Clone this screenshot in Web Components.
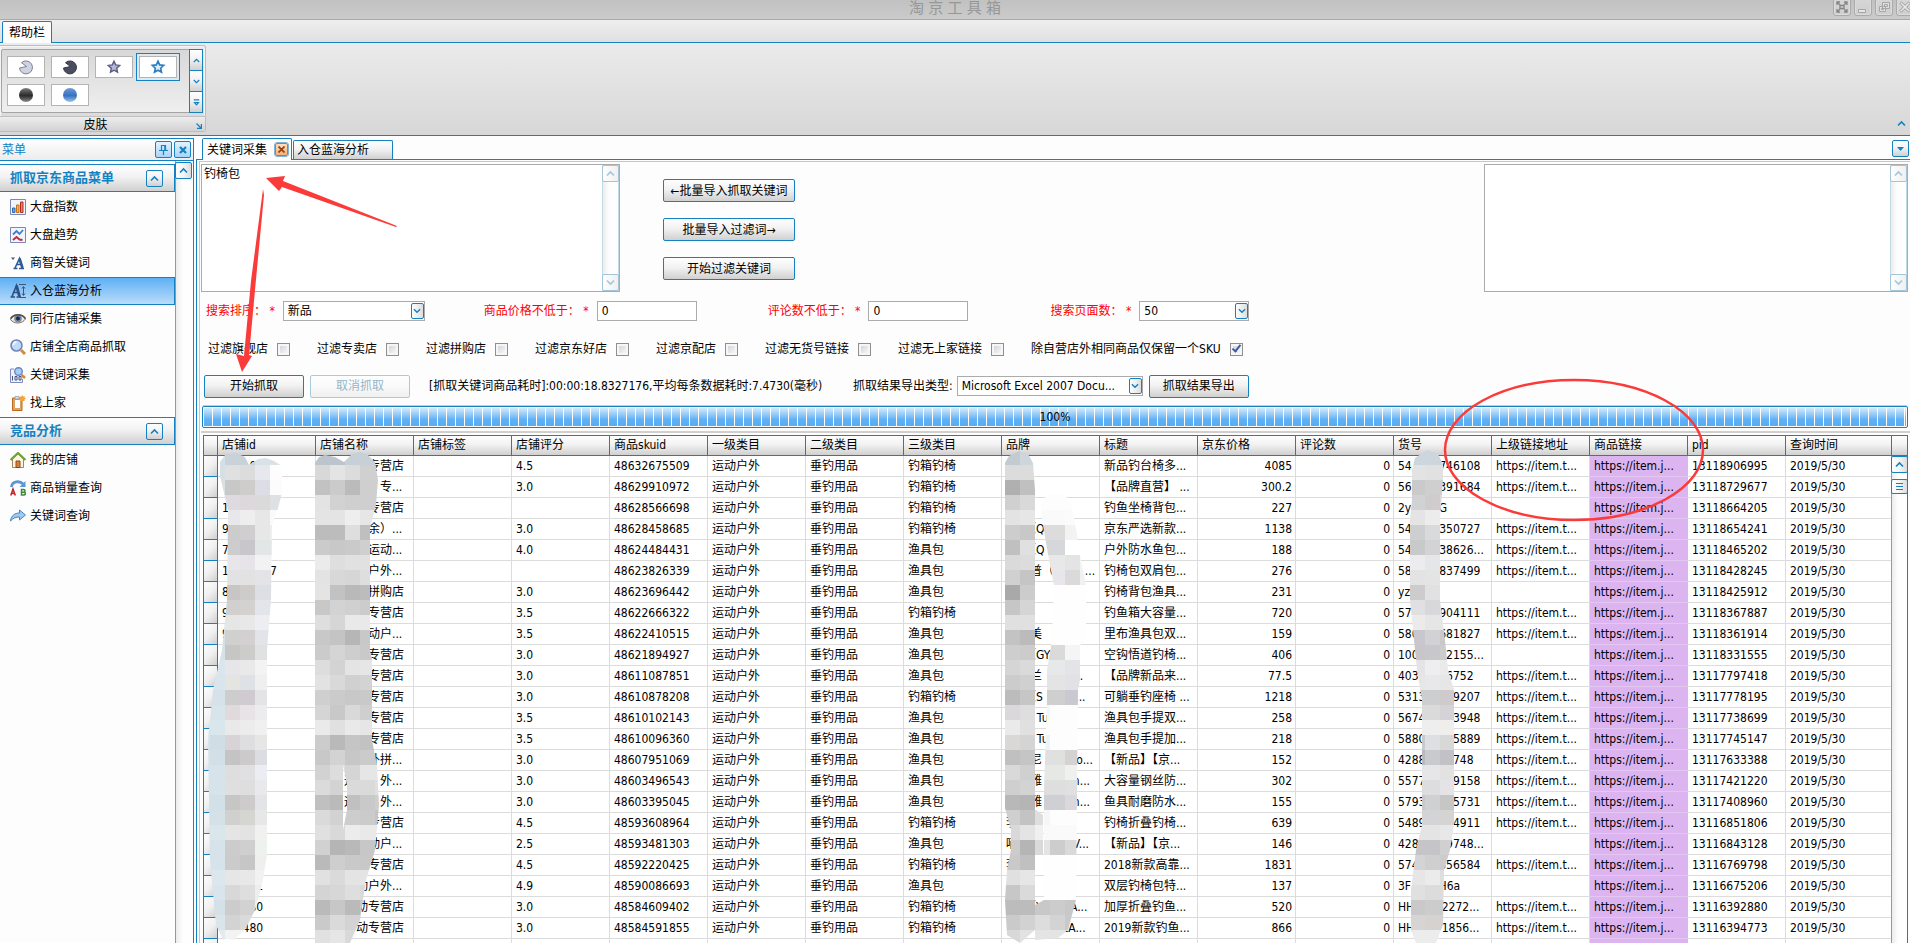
<!DOCTYPE html>
<html lang="zh-CN">
<head>
<meta charset="utf-8">
<title>淘京工具箱</title>
<style>
html, body { margin: 0; }
body {
  font: 12px/16px "DejaVu Sans Condensed", "Noto Sans", "Noto Sans CJK SC", sans-serif;
  color: #000; background: #fdfdfd; overflow: hidden;
  --blue: #1482c2; --grey: #ababab; --line: #dcdcdc;
  --face: linear-gradient(#fefefe, #f2f2f2 45%, #d0d0d0);
}
</style>
</head>
<body>
<app-window></app-window>
<script>
const BASE = `
*, *::before, *::after { box-sizing: border-box; }
button, input, select, textarea { font: inherit; color: inherit; margin: 0; }
button { padding: 0; cursor: default; }
svg { display: block; }
`;
function define(name, css, html, setup) {
  customElements.define(name, class extends HTMLElement {
    constructor() {
      super();
      const root = this.attachShadow({ mode: 'open' });
      root.innerHTML = `<style>${BASE}${css}</style>${typeof html === 'function' ? html(this) : html}`;
      if (setup) setup(root, this);
    }
  });
}
const chevron = (d, w = 9) => `<svg width="${w}" height="${w}" viewBox="0 0 9 9" fill="none" stroke="currentColor" stroke-width="1.6"><path d="${d}"/></svg>`;
const UP = 'M1 6.5 4.5 3 8 6.5', DOWN = 'M1 2.5 4.5 6 8 2.5';

/* ---------- small controls ---------- */
define('tool-button', `
:host { display: block; height: 23px; }
button { width: 100%; height: 100%; border: 1px solid var(--blue); border-radius: 2px; background: var(--face); }
button:disabled { border-color: #a8cadf; color: #94b6c9; background: linear-gradient(#fefefe, #fafafa 45%, #f0f0f0); }
`, el => `<button type="button" ${el.hasAttribute('disabled') ? 'disabled' : ''}><slot></slot></button>`);

define('scroll-strip', `
:host { display: flex; flex-direction: column; justify-content: space-between; width: 17px; border-left: 1px solid #58abe2; color: var(--blue);
  background: linear-gradient(90deg, #ececec, #fefefe 40%); }
:host([pale]) { color: #a3c6db; border-left-color: #c3dbe9; border-right: 1px solid #c3dbe9; }
:host([single]) { width: 18px; }
button { width: 17px; margin-left: -1px; height: 17px; display: grid; place-items: center; color: inherit; border: 1px solid currentColor; border-radius: 2px;
  background: linear-gradient(90deg, #fefefe, #f4f4f4 50%, #dcdcdc); }
:host([pale]) button { background: linear-gradient(90deg, #fefefe, #f0f0f0); }
:host([thumb]) { justify-content: flex-start; gap: 6px; }
.bars { height: 15px; }
`, el => `<button type="button" aria-label="向上滚动">${chevron(UP)}</button>` + (
  el.hasAttribute('thumb')
    ? `<button type="button" class="bars" aria-label="滚动块"><svg width="7" height="7" viewBox="0 0 7 7" stroke="currentColor"><path d="M0 .5h7M0 3.5h7M0 6.5h7"/></svg></button>`
    : el.hasAttribute('single') ? '' : `<button type="button" aria-label="向下滚动">${chevron(DOWN)}</button>`));

define('memo-box', `
:host { display: flex; height: 128px; border: 1px solid var(--grey); background: #fff; }
textarea { flex: 1; min-width: 0; border: 0; resize: none; outline: 0; padding: 1px 2px; background: transparent; }
`, el => `<textarea aria-label="${el.getAttribute('label')}" spellcheck="false">${el.getAttribute('value') || ''}</textarea><scroll-strip pale></scroll-strip>`);

define('form-field', `
:host { display: flex; align-items: center; gap: 8px; height: 20px; white-space: nowrap; }
label { color: #f00; }
:host([plain]) label { color: #000; }
:host([plain]) { gap: 4px; }
.box { position: relative; width: var(--w); }
select, input { display: block; width: 100%; height: 20px; border: 1px solid var(--grey); border-radius: 0; background: #fff; padding: 0 4px; appearance: none; outline: 0; }
.drop { position: absolute; right: 1px; top: 2px; width: 13px; height: 16px; border: 1px solid var(--blue); border-radius: 2px; display: grid; place-items: center; color: var(--blue);
  background: linear-gradient(90deg, #fefefe, #dedede); pointer-events: none; }
`, el => {
  const v = el.getAttribute('value');
  const control = el.hasAttribute('select')
    ? `<select id="c"><option>${v}</option></select><span class="drop">${chevron(DOWN, 8)}</span>`
    : `<input id="c" type="text" value="${v}">`;
  return `<label for="c"><slot></slot></label><div class="box">${control}</div>`;
});

define('tick-field', `
:host { display: block; }
label { display: flex; align-items: center; gap: 9px; white-space: nowrap; }
input { appearance: none; width: 13px; height: 13px; border: 1px solid #8f8f8f; background: linear-gradient(135deg, #d4d6dc, #f6f6f6) content-box, #f6f6f6; padding: 2px; display: grid; place-items: center; }
input:checked::after { content: ""; width: 5px; height: 9px; margin: -3px 0 0 1px; border: solid #3f5ba4; border-width: 0 2px 2px 0; transform: rotate(38deg); }
`, el => `<label><slot></slot><input type="checkbox" ${el.hasAttribute('checked') ? 'checked' : ''}></label>`);

/* ---------- window title ---------- */
define('title-bar', `
:host { display: flex; justify-content: center; height: 20px; border-bottom: 1px solid #a9a9a9; background: linear-gradient(#c1c1c1, #cbcbcb); position: relative; }
h1 { margin: 0; font-size: 15px; font-weight: 400; line-height: 16px; color: #979797; }
.buttons { position: absolute; right: -4px; top: -2px; display: flex; gap: 3px; }
button { width: 18px; height: 18px; border: 1px solid #aaa; border-radius: 3px; background: linear-gradient(#d6d6d6, #cecece); display: grid; place-items: center; box-shadow: inset 0 0 0 1px #dcdcdc; }
`, `
<h1>淘 京 工 具 箱</h1>
<div class="buttons">
<button type="button" aria-label="全屏"><svg width="12" height="12" viewBox="0 0 12 12" fill="none" stroke="#858585" stroke-width="1.3"><path d="M1 4V1h3M8 1h3v3M11 8v3H8M4 11H1V8M1 1l3 3M11 1 8 4M11 11 8 8M1 11l3-3M4 4.5h4v3H4z"/></svg></button>
<button type="button" aria-label="最小化"><svg width="12" height="12" viewBox="0 0 12 12" fill="#e6e6e6" stroke="#a6a6a6"><path d="M1.500 8.500h7v3h-7z"/></svg></button>
<button type="button" aria-label="还原"><svg width="12" height="12" viewBox="0 0 12 12" fill="#e0e0e0" stroke="#a6a6a6"><path d="M4.500 1.500h7v6h-7zM6.500 3.500h3v2h-3zM1.500 5.500h6v5h-6zM3.500 7.500h2v1h-2z"/></svg></button>
<button type="button" aria-label="关闭"><svg width="12" height="12" viewBox="0 0 12 12" fill="#e8e8e8" stroke="#9c9c9c"><path d="m1 2.500 1.500-1.500L6 4.300 9.500 1 11 2.500 7.700 6 11 9.500 9.500 11 6 7.700 2.500 11 1 9.500 4.300 6z"/></svg></button>
</div>`);

/* ---------- ribbon ---------- */
const STAR = 'm8 2.200 1.700 3.700 4 .5-3 2.800.8 4L8 11.200l-3.500 2 .8-4-3-2.800 4-.5z';
const SKINS = [
  ['银色', '<path d="M3.500 3.700A6.500 6.500 0 1 1 1.500 9l7-1.500z" fill="#cfd2e0" stroke="#7d8196"/>'],
  ['深色', '<path d="M3.500 3.700A6.500 6.500 0 1 1 1.500 9l7-1.500z" fill="#4a4d60" stroke="#35384a"/>'],
  ['星形', `<path d="${STAR}" fill="#b4b6d6" stroke="#585a80" stroke-width="1.400"/>`],
  ['蓝星', `<path d="${STAR}" fill="#d7effc" stroke="#2b7cc0" stroke-width="1.600"/>`],
  ['黑色', '<circle cx="8" cy="8" r="7" fill="url(#k)"/>'],
  ['蓝色', '<circle cx="8" cy="8" r="7" fill="url(#b)"/>']
];
define('ribbon-bar', `
:host { display: block; }
.tabs { height: 23px; padding: 1px 2px 0; background: linear-gradient(#eee, #e0e0e0); border-bottom: 1px solid var(--blue); }
.tab { display: block; width: 50px; height: 22px; border: 1px solid var(--blue); border-bottom: 0; border-radius: 2px 2px 0 0; background: #fcfcfc; }
.body { position: relative; height: 93px; border-bottom: 1px solid var(--blue); padding-top: 2px; background: linear-gradient(#ebebeb, #d7d7d7); }
section { width: 206px; height: 87px; border: 1px solid #bdbdbd; border-left: 0; border-radius: 0 3px 3px 0; box-shadow: inset 0 0 0 1px #f4f4f4; }
.gallery { display: flex; height: 64px; margin: 3px 2px 0 1px; border: 1px solid #a5a5a5; border-radius: 2px; background: linear-gradient(#d8d8d8, #efefef); }
.items { flex: 1; display: grid; grid-template-columns: repeat(4, 38px); grid-auto-rows: 22px; gap: 6px; padding: 6px 5px; }
.items button { background: #fff; border: 1px solid #b4b4b4; display: grid; place-items: center; }
.items .on { outline: 1px solid var(--blue); outline-offset: 2px; box-shadow: 0 0 0 2px #dfe8ef; }
.arrows { width: 14px; margin: -1px; display: flex; flex-direction: column; color: var(--blue); }
.arrows button { flex: 1; width: 14px; border: 1px solid var(--blue); background: var(--face); color: inherit; display: grid; place-items: center; }
.arrows button + button { border-top: 0; }
footer { position: relative; height: 15px; margin-top: 3px; border-top: 1px solid #c0c0c0; background: linear-gradient(#ededed, #d2d2d2); text-align: center; padding-right: 14px; }
footer svg { position: absolute; right: 3px; bottom: 2px; }
.fold { position: absolute; right: 4px; bottom: 7px; border: 0; background: none; color: var(--blue); }
`, `
<svg width="0" height="0" style="position:absolute"><defs>
<linearGradient id="k" x2="0" y2="1"><stop stop-color="#808080"/><stop offset=".3" stop-color="#4c4c4c"/><stop offset=".55" stop-color="#2a2a2a"/><stop offset="1" stop-color="#8c8c8c"/></linearGradient>
<linearGradient id="b" x2="0" y2="1"><stop stop-color="#6e9cd8"/><stop offset=".35" stop-color="#4a80ca"/><stop offset=".55" stop-color="#3a70be"/><stop offset="1" stop-color="#9cc6f0"/></linearGradient></defs></svg>
<div class="tabs"><button type="button" class="tab">帮助栏</button></div>
<div class="body"><section><div class="gallery"><div class="items">${
  SKINS.map(([n, p], i) => `<button type="button" aria-label="${n}" class="${i === 3 ? 'on' : ''}"><svg width="16" height="16" viewBox="0 0 16 16">${p}</svg></button>`).join('')
}</div><div class="arrows"><button type="button" aria-label="上一行">${chevron(UP, 7)}</button><button type="button" aria-label="下一行">${chevron(DOWN, 7)}</button><button type="button" aria-label="展开">${chevron('M1 1h7M2 4.500 4.500 7.500 7 4.500z', 7)}</button></div></div>
<footer>皮肤<svg width="6" height="6" viewBox="0 0 6 6" fill="none" stroke="#1482c2" stroke-width="1.200"><path d="M.5.5l4.500 4.500M5.400 1v4.400H1"/></svg></footer></section>
<button type="button" class="fold" aria-label="收起">${chevron(UP)}</button></div>`);

/* ---------- side navigation ---------- */
const ICONS = {
  bars: '<path d="M.5.5h15v15H.5z" fill="#f4f5fc" stroke="#7d86b8"/><path d="M2.500 9h2.500v4.500H2.500z" fill="#6aa6e0" stroke="#2c6cb0"/><path d="M6.500 6h2.500v7.500H6.500z" fill="#f6b45a" stroke="#c06f1a"/><path d="M10.500 3H13v10.500h-2.500z" fill="#f08068" stroke="#b02c20"/>',
  trend: '<path d="M.5.5h15v15H.5z" fill="#f2f3fb" stroke="#7d86b8"/><path d="M3 7.500 6.500 4l3 3L13 3" fill="none" stroke="#3f7ecb" stroke-width="1.800"/><path d="M3 13l3.500-3 3 2.500 3 .5" fill="none" stroke="#c32c38" stroke-width="2"/>',
  fontA: '<path d="M1 2.500h4L3 5z" fill="#4a5a74"/><path d="M3.500 13.500h4M9 13.500h5M5 13 9.500 3.500 12.500 13M6.500 9.500h5" fill="none" stroke="#2f5c96" stroke-width="1.600"/><path d="M9.500 3.500 12.500 13" stroke="#2f5c96" stroke-width="2.600"/>',
  fontSize: '<path d="M.5 14h4.500M6.500 14h4.500M2 13.500 6.500 2.500 9.500 13.500M3.500 9.500h5" fill="none" stroke="#2c5286" stroke-width="1.700"/><path d="M6.500 2.500 9.500 13.500" stroke="#2c5286" stroke-width="2.800"/><path d="M9 1.500h7M9.500 14.500H16M13.500 4v8M12 5.500l1.500-2 1.500 2M12 10.500l1.500 2 1.500-2" fill="none" stroke="#44566e"/>',
  eye: '<path d="M.5 8.500C3 3.500 12 2 15.500 8 12 13 4 13.500.5 8.500z" fill="#ece9e6" stroke="#8c6c50"/><circle cx="8" cy="7.500" r="3.800" fill="#6f8cb0"/><circle cx="8" cy="7.500" r="2" fill="#1b2942"/><path d="M.5 7.500C4 2.500 12 2.500 15.500 7.500" fill="none" stroke="#5e4432" stroke-width="1.500"/>',
  lens: '<circle cx="6.500" cy="6.500" r="5.500" fill="#bcdcf8" stroke="#7484bc" stroke-width="1.600"/><path d="M3.500 6a3 3 0 0 1 3-3" stroke="#fff" stroke-width="1.500" fill="none"/><path d="m11 11 4 4" stroke="#d48a3c" stroke-width="3"/>',
  hundred: '<path d="M4 2H.500v13.500h12V12" fill="#eef1fb" stroke="#7c8cbc"/><path d="M2.500 9v4.500M5 9.500h2v3.500H5zM9 9.500h2v3.500H9z" stroke="#46567c" fill="none"/><circle cx="8.500" cy="4.500" r="3.800" fill="#a8cdf4" stroke="#6c86c4" stroke-width="1.400"/><path d="m11.500 8 3.500 3" stroke="#d48a3c" stroke-width="2.600"/>',
  clip: '<path d="M2.500 3h9.500v12.500H2.500z" fill="#f0a04a" stroke="#b86a1c"/><path d="M4.500 4.500h6v9h-6z" fill="#fff" stroke="#d8a066"/><path d="M5 1.500h4v2.500H5z" fill="#dfe3ea" stroke="#8c8f98" stroke-width=".7"/><path d="M12.500.5v6M9.500 3.500h6M10.500 1.500l4 4M14.500 1.500l-4 4" stroke="#f2a33c" stroke-width="1.300"/>',
  home: '<path d="M2.500 7v8.500h11V7L8 2z" fill="#fdf5e4" stroke="#a8845c"/><path d="M.5 8 8 1l7.500 7" fill="none" stroke="#6ca534" stroke-width="2.200"/><path d="M6 9h4v6.500H6z" fill="#d8813c" stroke="#8a4a1c"/>',
  ab: '<path d="M1.500 7C2 1 10 .5 13 4" fill="none" stroke="#5c97d4" stroke-width="2.800"/><path d="M15.500 1v6h-6z" fill="#5c97d4"/><path d="M.8 15.500 3 9l2.300 6.500M1.500 13.500h3" fill="none" stroke="#c02030" stroke-width="1.500"/><path d="M11.500 9.500v5.500h2q2 0 2-1.500 0-1.300-2-1.300 1.500 0 1.500-1.500 0-1.200-1.500-1.200zM11.500 12.200h2" fill="none" stroke="#3c8a3a" stroke-width="1.500"/>',
  share: '<path d="M.5 13C1 7.500 5 5 9.500 5V2L15.500 7l-6 5V9C6 9 3 10 .5 13z" fill="#9ccaf0" stroke="#4c84bc"/>'
};
define('nav-item', `
:host { display: block; height: 28px; }
a { display: flex; align-items: center; gap: 4px; height: 28px; padding-left: 10px; color: #000; text-decoration: none; border: solid transparent; border-width: 1px 1px 1px 0; white-space: nowrap; }
:host([active]) a { border-color: var(--blue); background: linear-gradient(#5fb0f4, #b9dcfa); }
`, el => `<a href="#"><svg width="16" height="16" viewBox="0 0 16 16">${ICONS[el.getAttribute('icon')]}</svg><slot></slot></a>`);

define('nav-group', `
:host { display: block; }
header { display: flex; align-items: center; justify-content: space-between; height: 28px; margin-bottom: 1px; padding: 0 11px 0 10px; border: 1px solid var(--blue); border-left: 0; background: var(--face); }
h2 { margin: 0; font-size: 13px; color: var(--blue); font-weight: 700; }
button { width: 17px; height: 17px; display: grid; place-items: center; border: 1px solid var(--blue); border-radius: 2px; background: var(--face); color: var(--blue); }
`, el => `<header><h2>${el.getAttribute('heading')}</h2><button type="button" aria-label="折叠">${chevron(UP)}</button></header><slot></slot>`);

define('side-nav', `
:host { display: flex; flex-direction: column; width: 194px; flex: none; margin-top: 2px; border: 1px solid var(--blue); border-width: 1px 1px 0 0; background: #fdfdfd; }
.head { display: flex; align-items: center; gap: 2px; height: 22px; padding: 0 2px; border-bottom: 1px solid var(--blue); background: linear-gradient(#fff, #ececec); color: var(--blue); }
.head span { flex: 1; }
.head button { width: 17px; height: 17px; border: 1px solid var(--blue); border-radius: 2px; background: linear-gradient(#e4f2fd, #a9d4f8); display: grid; place-items: center; }
.body { flex: 1; display: flex; }
nav { flex: 1; padding-top: 3px; }
scroll-strip { padding-top: 1px; }
`, `
<div class="head"><span>菜单</span>
<button type="button" aria-label="固定"><svg width="9" height="10" viewBox="0 0 9 10" fill="none" stroke="#1482c2" stroke-width="1.200"><path d="M2.500.5h4v5h-4zM0 5.500h9M4.500 5.500V10M5.800.5v5"/></svg></button>
<button type="button" aria-label="关闭"><svg width="8" height="8" viewBox="0 0 8 8" stroke="#1482c2" stroke-width="2.200"><path d="m1 1 6 6M7 1 1 7"/></svg></button></div>
<div class="body"><nav>
<nav-group heading="抓取京东商品菜单">
<nav-item icon="bars">大盘指数</nav-item><nav-item icon="trend">大盘趋势</nav-item><nav-item icon="fontA">商智关键词</nav-item><nav-item icon="fontSize" active>入仓蓝海分析</nav-item><nav-item icon="eye">同行店铺采集</nav-item><nav-item icon="lens">店铺全店商品抓取</nav-item><nav-item icon="hundred">关键词采集</nav-item><nav-item icon="clip">找上家</nav-item>
</nav-group>
<nav-group heading="竞品分析">
<nav-item icon="home">我的店铺</nav-item><nav-item icon="ab">商品销量查询</nav-item><nav-item icon="share">关键词查询</nav-item>
</nav-group></nav><scroll-strip single></scroll-strip></div>`);

/* ---------- document tabs ---------- */
define('doc-tabs', `
:host { display: flex; align-items: flex-end; height: 24px; padding: 0 1px 0 6px; border-bottom: 1px solid var(--blue); background: #fdfdfd; }
.tab { display: flex; align-items: center; justify-content: space-between; border: 1px solid var(--blue); border-bottom: 0; border-radius: 2px 2px 0 0; padding: 0 3px; }
.on { width: 90px; height: 22px; margin-bottom: -1px; background: #fdfdfd; padding-left: 4px; }
.off { width: 100px; height: 19px; margin-left: 1px; background: var(--face); }
.tab button { border: 0; background: none; white-space: nowrap; }
.tab .x { width: 13px; height: 13px; border: 1px solid #d07428; border-radius: 2px; background: linear-gradient(#fde0c4, #f6b07a); display: grid; place-items: center; outline: 1px solid #7db4dd; }
.list { width: 17px; height: 17px; margin: 0 0 2px auto; border: 1px solid var(--blue); border-radius: 2px; background: var(--face); display: grid; place-items: center; }
`, `
<div class="tab on"><button type="button">关键词采集</button><button type="button" class="x" aria-label="关闭标签"><svg width="7" height="7" viewBox="0 0 7 7" stroke="#9c3c08" stroke-width="1.700"><path d="m.5.5 6 6M6.500.5l-6 6"/></svg></button></div>
<div class="tab off"><button type="button">入仓蓝海分析</button></div>
<button type="button" class="list" aria-label="标签列表"><svg width="7" height="4" viewBox="0 0 7 4" fill="#1482c2"><path d="M0 0h7L3.500 4z"/></svg></button>`);

/* ---------- search form ---------- */
define('search-form', `
:host { display: block; flex: none; }
.memos { display: flex; }
.left { width: 419px; }
.right { width: 424px; margin-left: auto; }
.actions { display: flex; flex-direction: column; gap: 16px; width: 132px; margin: 15px 0 0 43px; }
.fields { display: flex; gap: 58px; margin: 9px 0 0 5px; }
.fields :nth-child(1) { margin-right: 1px; }
.fields :nth-child(2) { margin-right: 13px; }
.fields :nth-child(3) { margin-right: 24px; }
.ticks { display: flex; align-items: center; gap: 27px; height: 14px; margin: 21px 0 0 7px; }
.run { display: flex; align-items: center; gap: 6px; height: 24px; margin: 18px 0 0 3px; white-space: nowrap; }
.run tool-button { width: 100px; }
.run output { width: 431px; padding-left: 13px; }
.progress { height: 22px; margin: 8px 0 0 1px; padding: 1px; border: 1px solid var(--blue); border-radius: 2px; box-shadow: 0 -1px #ccc; }
.progress div { height: 18px; line-height: 18px; text-align: center; background: repeating-linear-gradient(90deg, transparent 0 8px, #fff 8px 9px), linear-gradient(#d3eafc, #5fb1f5 65%, #57acf3); }
`, `
<div class="memos"><memo-box class="left" label="关键词" value="钓椅包"></memo-box>
<div class="actions"><tool-button>←批量导入抓取关键词</tool-button><tool-button>批量导入过滤词→</tool-button><tool-button>开始过滤关键词</tool-button></div>
<memo-box class="right" label="过滤词"></memo-box></div>
<div class="fields">
<form-field select value="新品" style="--w:142px">搜索排序： *</form-field><form-field value="0" style="--w:100px">商品价格不低于： *</form-field><form-field value="0" style="--w:100px">评论数不低于： *</form-field><form-field select value="50" style="--w:110px">搜索页面数： *</form-field></div>
<div class="ticks"><tick-field>过滤旗舰店</tick-field><tick-field>过滤专卖店</tick-field><tick-field>过滤拼购店</tick-field><tick-field>过滤京东好店</tick-field><tick-field>过滤京配店</tick-field><tick-field>过滤无货号链接</tick-field><tick-field>过滤无上家链接</tick-field><tick-field checked>除自营店外相同商品仅保留一个SKU</tick-field></div>
<div class="run"><tool-button>开始抓取</tool-button><tool-button disabled>取消抓取</tool-button>
<output>[抓取关键词商品耗时]:00:00:18.8327176,平均每条数据耗时:7.4730(毫秒)</output>
<form-field plain select value="Microsoft Excel 2007 Docu..." style="--w:186px">抓取结果导出类型:</form-field><tool-button>抓取结果导出</tool-button></div>
<div class="progress"><div role="progressbar" aria-label="进度" aria-valuenow="100">100%</div></div>`);

/* ---------- result table ---------- */
const HEADS = ['店铺id', '店铺名称', '店铺标签', '店铺评分', '商品skuid', '一级类目', '二级类目', '三级类目', '品牌', '标题', '京东价格', '评论数', '货号', '上级链接地址', '商品链接', 'pid', '查询时间'];
/* "_" is a digit-wide blank, "~" a full-width blank: the censored part of a value */
const ROWS = `____0|~~~~专营店|4.5|48632675509|1||新品钓台椅多...|4085|54____746108|1|13118906995
|~~~~~专...|3.0|48629910972|1||【品牌直营】 ...|300.2|56____391684|1|13118729677
1|~~~~专营店||48628566698|1||钓鱼坐椅背包...|227|2y____G|0|13118664205
9|~~~~余）...|3.0|48628458685|1|~~（Q|京东严选新款...|1138|54____350727|1|13118654241
7|~~~~运动...|4.0|48624484431|0|~~（Q|户外防水鱼包...|188|54____38626...|1|13118465202
1______7|~~~~户外...||48623826339|0|~~普（~~_...|钓椅包双肩包...|276|58____837499|1|13118428245
8|~~~~拼购店|3.0|48623696442|0||钓椅背包渔具...|231|yz|0|13118425912
9|~~~~专营店|3.5|48622666322|1||钓鱼箱大容量...|720|57____904111|1|13118367887
9|~~~~动户...|3.5|48622410515|0|~~美|里布渔具包双...|159|580___681827|1|13118361914
|~~~~专营店|3.0|48621894927|0|~~（GY|空钩悟道钓椅...|406|100___52155...|0|13118331555
|~~~~专营店|3.0|48611087851|0|~~兰~~_...|【品牌新品来...|77.5|403____6752|1|13117797418
|~~~~专营店|3.0|48610878208|1|~~（S~~G...|可躺垂钓座椅 ...|1218|5313____9207|1|13117778195
|~~~~专营店|3.5|48610102143|0|~~_Tu|渔具包手提双...|258|5674____3948|1|13117738699
|~~~~专营店|3.5|48610096360|0|~~_Tu|渔具包手提加...|218|5880____5889|1|13117745147
|~~~~外拼...|3.0|48607951069|0|~~尼~~_ o...|【新品】【京...|152|4288____748|1|13117633388
|~~运~~外...|3.0|48603496543|0|~~雅~~_n...|大容量钢丝防...|302|5577____9158|1|13117421220
|~~运~~外...|3.0|48603395045|0|~~雅~~_n...|鱼具耐磨防水...|155|5793____5731|1|13117408960
|~~~~专营店|4.5|48593608964|1|李|钓椅折叠钓椅...|639|5489____4911|1|13116851806
|~~~~动户...|2.5|48593481303|0|喃~~~~_V...|【新品】【京...|146|428____9748...|0|13116843128
|~~~~专营店|4.5|48592220425|1|李|2018新款高靠...|1831|574___356584|1|13116769798
_____1|~~~动户外...|4.9|48590086693|0|孝|双层钓椅包特...|137|3F____H6a|0|13116675206
____80|~~~动专营店|3.0|48584609402|1|~~（Y~~ A...|加厚折叠钓鱼...|520|HH____2272...|1|13116392880
___480|~~~动专营店|3.0|48584591855|1|~~~~_ZA...|2019新款钓鱼...|866|HH____1856...|1|13116394773`.split('\n').map(r => {
  const [id, name, score, sku, box, brand, title, price, code, up, pid] = r.replace(/_/g, '\u2007').replace(/~/g, '\u3000').split('|');
  return [id, name, '', score, sku, '运动户外', '垂钓用品', box === '1' ? '钓箱钓椅' : '渔具包', brand, title, price, '0', code, up === '1' ? 'https://item.t...' : '', 'https://item.j...', pid, '2019/5/30'];
});
ROWS.push(HEADS.map(() => ''));
define('data-grid', `
:host { display: flex; flex: 1; min-height: 0; overflow: hidden; margin: 3px 0 0; padding: 2px 2px 0; border-top: 2px solid #cfcfcf; }
.view { flex: 1; min-width: 0; border: solid var(--blue); border-width: 1px 0 0 1px; overflow: hidden; }
table { width: 100%; table-layout: fixed; border-collapse: separate; border-spacing: 0; }
th, td { height: 21px; padding: 0 3px 0 4px; text-align: left; font-weight: 400; white-space: pre; overflow: hidden; border: solid var(--line); border-width: 0 1px 1px 0; background: #fff; }
thead th { height: 20px; padding-bottom: 2px; border-color: var(--blue); background: var(--face); }
thead th:last-child, td:last-child { border-right: 0; }
tbody th { background: linear-gradient(135deg, #fdfdfd, #f0f0f0 50%, #cfcfcf); border-color: var(--blue); }
.n { text-align: right; }
.link { background: #dcb5f0; }
.link { border-color: #dcb5f0 #dcb5f0 #e3c8f2; }
.side { display: flex; flex-direction: column; width: 17px; border: solid var(--blue); border-width: 1px 1px 0 0; }
.side i { height: 20px; flex: none; border: solid var(--blue); border-width: 0 0 1px 1px; background: var(--face); }
.side scroll-strip { flex: 1; width: 16px; }
`, `<div class="view"><table><colgroup><col style="width:14px">${'<col style="width:98px">'.repeat(16)}<col></colgroup>
<thead><tr><th></th>${HEADS.map(h => `<th scope="col">${h}</th>`).join('')}</tr></thead>
<tbody>${ROWS.map(r => `<tr><th></th>${r.map((c, i) => `<td${i === 10 || i === 11 ? ' class="n"' : i === 14 ? ' class="link"' : ''}>${c}</td>`).join('')}</tr>`).join('')}</tbody></table></div>
<div class="side"><i></i><scroll-strip thumb></scroll-strip></div>`);

/* ---------- censored strips: 15px mosaic, clipped to brush strokes ---------- */
const STROKES = [
  { x: 210, clip: 'M220 476 220 462 225 455 236 453 245 457 249 465 258 459 266 458 274 461 282 466 282 493 277 512 272 525 271 600 267 650 267 855 262 885 255 910 245 930 233 940 222 938 216 925 210 860 208 740 213 690 222 650 227 600 228 510z',
    rows: 'd4e0e6 c8d2d8 c8d2d8 d9e2e6 d9e2e6|d4e0e6 e0e0e0 dcdcdc e6e8ee fdfdfd|d8e0e4 c8c8c8 cfcdcc dcdee6 fcfcfc|e0dde2 dedae0 dcd8dc dadada dfe0e2|eee e8e8ea eee e6e7e6 fafafa|eee cdcccd d0cece e6e7e6 eee|eee cdcdcf c8c6ca e2e6e6 e2e6e6|eee e8e6ea e6e4e8 f1f2f1 f1f2f1|eee e2e2e4 e2e2e2 e4e4e8 e4e4e8|ddd c8c6c4 cecccb dddfe5 dddfe5|ddd d2d0ce d4d2d0 e3e5ea e3e5ea|dbe6ec e6e6e6 e8e8e8 eeeef2 eeeef2|d4e0e6 d0d0ce d2d0d0 e2e4ea e2e4ea|d6e2e9 c6c6c4 cccccb dfe2e0 dfe2e0|d9e6ed e6e6ea e9e9ea f3f3f3 f3f3f3|d9e5ec e4e4e1 dee1e6 efefef efefef|d6e2ea cdcdcd cfcbce e4e4e6 e4e4e6|d8e4eb e0dadd e6e4e6 ecebed ecebed|d9e6ec e9e9e9 ececec f0f0f0 f0f0f0|cfdde5 d8d3d6 dedddf e6e6e6 e6e6e6|d2dfe6 c4c4c4 cdcacb dcdde3 dcdde3|d6e3ea dedede e0e0e3 ebedf3 ebedf3|d6e3ea dfdfdf dedede e9e9ec e9e9ec|d2e0e8 c8c6c4 cdcbcb e3e4e8 e3e4e8|d4e2e8 d0d0ce d5d5d2 e7e7e7 e7e7e7|d9e6ec e5e5e5 e3e3e3 f1f1f1 f1f1f1|d6e3ea cccccc cfcfcf eef2ef eef2ef|d6e3ea cbcbcb c6c6c6 efefef efefef|dbe7ed e6e6e6 e8e8e8 f2f2f2 f2f2f2|d8e5ec d8d8d8 dededf eee eee|d4e1e8 ccc d2d2d2 f0f0f0 f0f0f0|d9e5ea d3d3d3 dadada f8f8f8 f8f8f8|e2ecf0 f3f3f3 f3f3f3 f8f8f8 f8f8f8' },
  { x: 315, clip: 'M315 463 319 457 325 455 335 457 344 462 352 454 360 452 368 455 375 462 378 480 376 505 370 528 370 650 372 660 372 740 377 765 379 805 375 850 366 880 360 920 350 943 315 943zM343 765 347 785 347 810 343 830z',
    rows: 'bcc5cc bcc5cc c6d0d6 c6d0d6 c6d0d6|d8d8d8 e4e4e4 dcdcdc d0d0d0 d0d0d0|c2c2c2 cbcbcb bbb cfcfcf cfcfcf|e3e3e3 d2d2d2 cfcfcf cfcfcf cfcfcf|e4e4e4 e4e4e4 eee e6e6e6 e6e6e6|bcbcbc bcbcbc dedede bfbfbf bfbfbf|cbcbcb c8c8c8 cacaca cfcfcf|ebebeb dedede e1e1e1 e1e1e1|e3e3e3 d8d8d8 d6d6d6 dedede|e6e4e2 c0c2c4 b9b9b9 bcbcbc|c8c8c8 d3d3d3 d0d0d0 ccc|dedede d6d6d6 e9e9e9 e9e9e9|c8c8c8 c4c4c4 b6b6b6 c8c8c8|cbcbcb d5d5d5 cecece c9c9c9|ddd d3d3d3 e4e4e4 e6e6e6|e2e2e2 d9d9d9 d0d0d0 d3d3d3|cfcfcf cbcbcb c8c8c8 c9c9c9|d5d5d5 c8c8c8 d9d9d9 cfcfcf|eaeaea e0e0e0 e9e9e9 e6e6e6|ccc b9b9b9 c5c5c5 c2c2c2|c8c8c8 d3d3d3 c7c7c7 cbcbcb cbcbcb|d2d2d2 ddd d5d5d5 e6e6e6 e6e6e6|dbdbdb d3d3d3 dadada dadada e0e0e0|c0c0c0 bababa c0c0c0 c9c9c9 cecece|dadada d2d2d2 cdcdcd cbcbcb c4c4c4|e0e0e0 d9d9d9 ececec e9e9e9 e9e9e9|d1d1d1 b5b5b5 b9b9b9 c7c7c7 c7c7c7|bababa cecece c9c9c9 c8c8c8|e1e1e1 dadada e4e4e4 e4e4e4|d4d4d4 d7d7d7 dedede dadada|bababa c7c7c7 bababa c8c8c8|cacaca dadada d3d3d3 d3d3d3|e1e1e1 e6e6e6 d9d9d9 d9d9d9' },
  { x: 1005, clip: 'M1003 466 1009 456 1019 451 1028 454 1033 463 1035 490 1035 790 1036 810 1043 815 1043 855 1036 860 1035 930 1020 943 1007 935 1005 900 1007 870 1011 850 1011 830 1005 808z',
    rows: 'c4cbd0 cdd6da|dcdcdc dcdcdc|b0b0b0 c0c0c0|d0d0d0 d9d9d9|e3e3e3 e6e6e6|cdcdcd c8c8c8|c0c0c0 e0e0e0|dadada dcdcdc|d0d0d0 c5c5c5|a9a9a9 ccc|c6c6c6 d5d5d5|e0e0e0 e0e0e0|c3c3c3 bbb|cecece ccc|d5d5d5 dadada|ccc d0d0d0|bcbcbc c6c6c6|dad8da dedede|eaeaea e0e0e0|dad7d7 d4d4d4|c0c0c0 c5c5c5|d9d9d9 d0d0d0|cfcfcf d3d3d3|b8b8b8 b5b5b5|cfcfcf c3c3c3 dedede|d9d9d9 e4e4e4 f0f0f0|ccc b5b5b5 dadada|c9c9c9 c0c0c0|e0e0e0 e6e6e6|c7c7c7 dadada|bcbcbc bcbcbc|cacaca d2d2d2|d8d8d8 e2e2e2' },
  { x: 1035, clip: 'M1041 505 1046 496 1056 493 1066 496 1072 508 1078 540 1080 555 1086 585 1086 640 1080 645 1080 680 1078 690 1076 900 1068 930 1058 938 1035 940 1035 905 1044 900 1044 790 1047 700 1047 670 1052 640 1054 585 1049 560 1043 525z',
    rows: 'fff fff fff fff|fff fff fff fff|fff fff fff fff|fdfdfd fdfdfd fdfdfd fdfdfd|fafafa fafafa fbfbfb fbfbfb|dcdcdc dcdcdc f3f3f3 f3f3f3|d5d7da d5d7da fff fff|e8e8e8 e8e8e8 e4e4e4 f0f6f4|e8e6ea e8e6ea dadada f1f1f1|fefefe fefefe fefefe fefefe|fefefe fefefe fefefe fefefe|fefefe fefefe fefefe fefefe|fefefe fefefe fefefe fefefe|dadada dadada f5f5f5 f5f5f5|e6e8ea e6e8ea e4e4e8 e4e4e8|e4e4e4 e4e4e4 e2e2e6 dededf|cfcfcf cfcfcf cac9d2 c9c8d4|f1f8f8 fdfdfd fdfdfd fdfdfd|fdfdfd fdfdfd fdfdfd fdfdfd|ecf4f6 fdfdfd fdfdfd fdfdfd|e0e0e0 e0e0e0 d5d2d2 dadada|e6e8e6 e6e8e6 f0f0ee e4e4e4|dedede dedede dfe0e0 e0e0e2|cfd0d4 cfd0d4 dad8da d0d0d6|f6f6f6 fdfdfd fdfdfd fdfdfd|fafafa fafafa fafafa f4f8f6|e4e4e4 cecccf d9d9d9 d9d9d9|fefefe fefefe fefefe fefefe|fefefe fefefe fefefe fefefe|fefefe fefefe fefefe fefefe|c8c8c8 ccc c8c8c8 cbcbcb|ddd d3d3d3 c9c9c9 d0d0d0|e4e4e4 e4e4e4 dadada dadada' },
  { x: 1410, clip: 'M1412 470 1415 458 1427 450 1438 454 1443 464 1443 480 1440 520 1440 600 1445 640 1448 670 1454 690 1454 825 1450 850 1444 870 1443 925 1436 943 1416 943 1411 930 1411 890 1416 850 1422 825 1422 700 1417 670 1414 640 1410 600 1409 530 1412 500z',
    rows: 'cdd6dc cdd6dc cdd6dc|e3e3e3 e1e1e1 e1e1e1|cacaca cfcfcf cfcfcf|d1d2d4 d0cccd dadada|e4e4e4 ececec ececec|cdced0 d8dadc d8dadc|c8c9ca d3d3d6 d3d3d6|ecebed e4e6e8 e4e6e8|e4e3e4 e4e4e4 e4e4e4|ccc e1e1e3 e1e1e3|e0e0e2 d8d8da e0e0e0|ebebeb e6e6e6 e6e6e6|c9c7cd d2d2d4 c9c9c9|c8c6ca c8c8ca ccc|e4e4e6 eee eaeaea|e6e6e6 e8e8ea e6e6e6|cdced0 cdced0 cfcbcd|dadada dadada d4d4d6|eee eee f0eeec|c9cacc dedfe2 d8d8d8|b9babc c9cad0 c2c2c6|e6e6e8 e6e6e8 e2e2e2|dddddf dddddf e4e4e6|c9c9cc cfd0d2 c6c6c4|d4d4d6 d4d4d6 d6d4d2|e4e4e4 e4e4e4 e8e8e8|c5c5c8 c5c5c8 d0d0d0|d4d4d6 d0cfd0 cdcbcb|e6e6e6 ebebeb dedede|e0e0e0 dcdcdc dcdcdc|c9c9c9 ccc ccc|d6d5d4 d6d2d0 d6d2d0|ececec ececec ececec' }
];
const OVERLAY = `:host { position: absolute; inset: 0; pointer-events: none; overflow: hidden; } svg { width: 100%; height: 100%; }`;
define('censor-layer', OVERLAY + ' svg { shape-rendering: crispEdges; }', `<svg aria-hidden="true">${STROKES.map((s, k) =>
  `<clipPath id="s${k}"><path clip-rule="evenodd" d="${s.clip.replace(/M(\d+) (\d+) /g, 'M$1 $2 L')}"/></clipPath><g clip-path="url(#s${k})">${
    s.rows.split('|').map((row, j) => row.split(' ').map((c, i) => `<rect x="${s.x + i * 15}" y="${450 + j * 15}" width="15" height="15" fill="#${c}"/>`).join('')).join('')
  }${s.x === 210 ? '<path d="M205 640h5v300h-5z" fill="#d6e3ea"/>' : ''}</g>`).join('')}</svg>`);

/* ---------- red pen marks ---------- */
define('pen-layer', OVERLAY, `<svg aria-hidden="true"><g fill="#fb3b3a">
<path d="M266 178 285 176 283 181 397 226 396 227 282 187 279 191z"/>
<path d="M263 189 264 195 255 290 249 355 252 356 242 372 236 354 244 356 251 281z"/></g>
<ellipse cx="1574" cy="450" rx="129" ry="70" fill="none" stroke="#fb3b3a" stroke-width="2.500"/></svg>`);

/* ---------- whole window ---------- */
define('app-window', `
:host { display: flex; flex-direction: column; height: 100vh; position: relative; overflow: hidden; }
.work { flex: 1; display: flex; gap: 2px; min-height: 0; }
main { flex: 1; min-width: 0; display: flex; flex-direction: column; }
.page { flex: 1; min-height: 0; display: flex; flex-direction: column; margin-top: -1px; border-left: 1px solid var(--blue); padding: 2px 0 0 2px; }
.sheet { flex: 1; min-height: 0; display: flex; flex-direction: column; border: solid #c6c6c6; border-width: 1px 0 0 1px; padding: 2px 0 0 1px; }
search-form { padding-right: 2px; }
`, `
<title-bar></title-bar><ribbon-bar></ribbon-bar>
<div class="work"><side-nav></side-nav><main><doc-tabs></doc-tabs>
<div class="page"><div class="sheet"><search-form></search-form><data-grid></data-grid></div></div></main></div>
<censor-layer></censor-layer><pen-layer></pen-layer>`);
</script>
</body>
</html>
